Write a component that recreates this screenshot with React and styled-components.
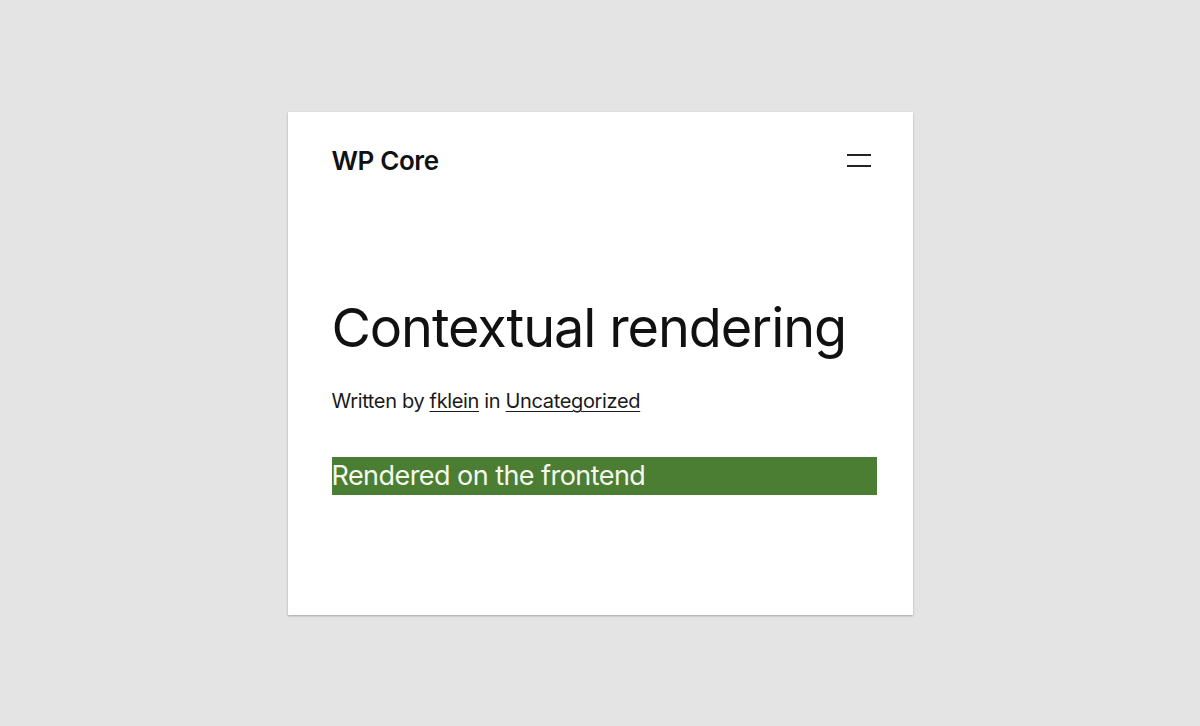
import styled, { createGlobalStyle } from "styled-components";

const GlobalStyle = createGlobalStyle`
  html, body {
    margin: 0;
    padding: 0;
    background: #e4e4e4;
  }
  body {
    font-family: Inter, "Noto Sans", sans-serif;
    color: #111111;
  }
`;

const Stage = styled.main`
  width: 1200px;
  height: 726px;
  display: flex;
  align-items: center;
  justify-content: center;
`;

const Card = styled.article`
  box-sizing: border-box;
  width: 625px;
  height: 503px;
  background: #ffffff;
  box-shadow: 0 1px 2px rgba(0, 0, 0, 0.28);
  padding: 36px 42px 0 44px;
`;

const Header = styled.header`
  display: flex;
  align-items: center;
  justify-content: space-between;
  height: 26px;
`;

const SiteTitle = styled.h2`
  margin: 0;
  font-size: 26px;
  font-weight: 600;
  letter-spacing: -0.4px;
`;

const MenuButton = styled.button`
  border: 0;
  background: none;
  padding: 0;
  width: 24px;
  height: 24px;
  display: flex;
  flex-direction: column;
  justify-content: center;
  gap: 9px;

  span {
    display: block;
    height: 2px;
    background: #222222;
  }
`;

const PostTitle = styled.h1`
  margin: 124px 0 0;
  font-size: 54px;
  font-weight: 400;
  line-height: 1.1;
  letter-spacing: -1.1px;
`;

const Meta = styled.p`
  margin: 32px 0 0;
  font-size: 20px;
  letter-spacing: -0.35px;
  color: #1a1a1a;

  a {
    color: inherit;
    text-decoration: underline;
    text-underline-offset: 3px;
    text-decoration-thickness: 1px;
  }
`;

const Notice = styled.div`
  margin-top: 44px;
  width: 545px;
  height: 38px;
  display: flex;
  align-items: center;
  background: ${(props) => props.$tone};
  color: #f4f8ee;
  font-size: 27px;
  letter-spacing: -0.55px;
`;

const App = () => {
  return (
    <>
      <GlobalStyle />
      <Stage>
        <Card>
          <Header>
            <SiteTitle>WP Core</SiteTitle>
            <MenuButton aria-label="Open menu">
              <span />
              <span />
            </MenuButton>
          </Header>
          <PostTitle>Contextual rendering</PostTitle>
          <Meta>
            Written by <a href="#">fklein</a> in <a href="#">Uncategorized</a>
          </Meta>
          <Notice $tone="#4b7d33">Rendered on the frontend</Notice>
        </Card>
      </Stage>
    </>
  );
};

export default App;
